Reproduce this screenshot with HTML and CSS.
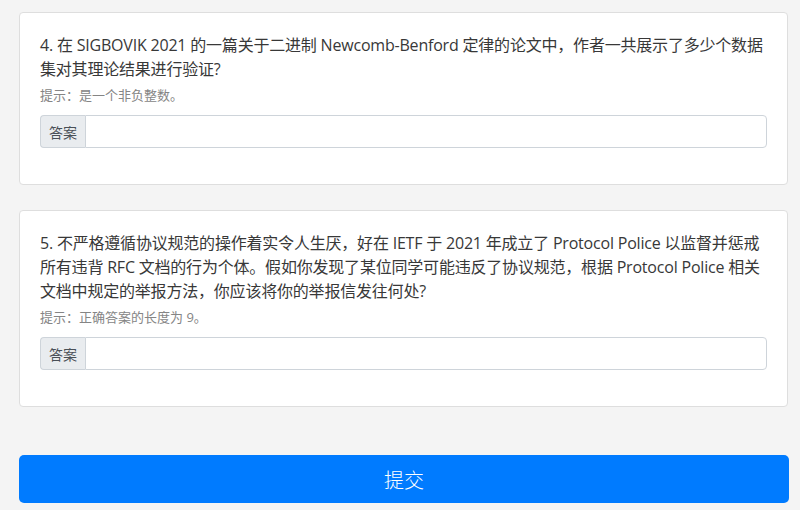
FILE: index.html
```html
<!DOCTYPE html>
<html lang="zh-CN">
<head>
<meta charset="utf-8">
<title>问卷</title>
<link rel="stylesheet" href="styles.css">
</head>
<body>
<main class="page">
  <section class="card">
    <p class="question">4. 在 SIGBOVIK 2021 的一篇关于二进制 Newcomb-Benford 定律的论文中，作者一共展示了多少个数据<br>集对其理论结果进行验证?</p>
    <p class="hint">提示：是一个非负整数。</p>
    <div class="input-group">
      <span class="prepend">答案</span>
      <input class="answer" type="text">
    </div>
  </section>
  <section class="card">
    <p class="question">5. 不严格遵循协议规范的操作着实令人生厌，好在 IETF 于 2021 年成立了 Protocol Police 以监督并惩戒<br>所有违背 RFC 文档的行为个体。假如你发现了某位同学可能违反了协议规范，根据 Protocol Police 相关<br>文档中规定的举报方法，你应该将你的举报信发往何处?</p>
    <p class="hint">提示：正确答案的长度为 9。</p>
    <div class="input-group">
      <span class="prepend">答案</span>
      <input class="answer" type="text">
    </div>
  </section>
  <button class="submit" type="button">提交</button>
</main>
</body>
</html>
```
FILE: styles.css
```css
html, body {
  margin: 0;
  padding: 0;
  background: #f4f4f4;
}
body {
  font-family: "Open Sans", "Noto Sans CJK SC", sans-serif;
  color: #333;
}
.page {
  width: 770px;
  margin-left: 19px;
  padding-top: 12px;
  display: flex;
  flex-direction: column;
}
.card {
  background: #fff;
  border: 1px solid #dedede;
  border-radius: 4px;
  padding: 20px;
  margin-bottom: 25px;
  width: 727px;
}
.card + .card {
  margin-bottom: 48px;
}
.question {
  margin: 0;
  font-size: 16px;
  line-height: 24px;
  color: #383838;
  white-space: nowrap;
  letter-spacing: -0.2px;
}
.hint {
  margin: 4px 0 10px 0;
  font-size: 13px;
  line-height: 20px;
  color: #858585;
}
.input-group {
  display: flex;
  height: 33px;
  margin-bottom: 16px;
}
.prepend {
  display: flex;
  align-items: center;
  padding: 0 8px;
  font-size: 14px;
  color: #495057;
  background: #e9ecef;
  border: 1px solid #ced4da;
  border-right: 0;
  border-radius: 4px 0 0 4px;
}
.answer {
  flex: 1;
  min-width: 0;
  border: 1px solid #ced4da;
  border-radius: 0 4px 4px 0;
  background: #fff;
  box-sizing: border-box;
  height: 33px;
  font-size: 14px;
  padding: 0 12px;
  outline: none;
}
.submit {
  height: 48px;
  width: 770px;
  border: 0;
  border-radius: 5px;
  background: #007bff;
  color: #fff;
  font-family: "Noto Sans CJK SC", sans-serif;
  font-weight: 300;
  font-size: 20px;
  cursor: pointer;
}
```
